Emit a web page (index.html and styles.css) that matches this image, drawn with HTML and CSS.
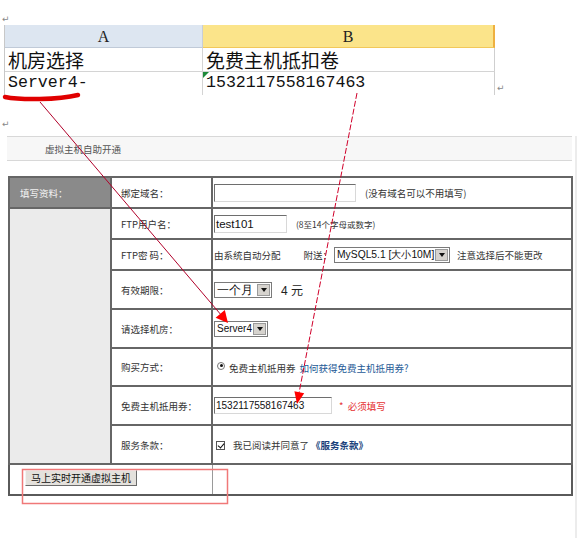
FILE: index.html
```html
<!DOCTYPE html>
<html lang="zh">
<head>
<meta charset="utf-8">
<link rel="stylesheet" href="styles.css">
</head>
<body>
<div class="page">
  <div class="para para-top"><span class="ret">↵</span></div>
  <div class="sheet-line">
    <div class="sheet">
      <div class="colhead colhead-a">A</div>
      <div class="colhead colhead-b">B</div>
      <div class="cell cell-cn">机房选择</div>
      <div class="cell cell-cn cell-b">免费主机抵扣卷</div>
      <div class="cell cell-mono">Server4-</div>
      <div class="cell cell-mono cell-b"><span class="tri"></span>1532117558167463</div>
    </div>
    <span class="ret ret-side">↵</span>
  </div>
  <div class="para para-mid"><span class="ret">↵</span></div>

  <div class="form-area">
    <div class="title-bar">虚拟主机自助开通</div>
    <table class="form">
      <colgroup><col class="c1"><col class="c2"><col class="c3"></colgroup>
      <tr class="r31">
        <td class="sec">填写资料：</td>
        <td class="lbl">绑定域名：</td>
        <td class="val"><span class="input input-domain"></span><span class="note">(没有域名可以不用填写)</span></td>
      </tr>
      <tr class="r31">
        <td class="side" rowspan="7"></td>
        <td class="lbl">FTP用户名：</td>
        <td class="val"><span class="input input-user">test101</span><span class="note small">(8至14个字母或数字)</span></td>
      </tr>
      <tr class="r31">
        <td class="lbl">FTP密 码：</td>
        <td class="val"><span class="plain">由系统自动分配</span><span class="plain gift">附送：</span><span class="select sel-mysql"><span class="sel-text">MySQL5.1 [大小10M]</span><span class="sel-btn"></span></span><span class="plain warn">注意选择后不能更改</span></td>
      </tr>
      <tr class="r39">
        <td class="lbl">有效期限：</td>
        <td class="val"><span class="select sel-term"><span class="sel-text">一个月</span><span class="sel-btn"></span></span><span class="price">4 元</span></td>
      </tr>
      <tr class="r39">
        <td class="lbl">请选择机房：</td>
        <td class="val"><span class="select sel-room"><span class="sel-text">Server4</span><span class="sel-btn"></span></span></td>
      </tr>
      <tr class="r38">
        <td class="lbl">购买方式：</td>
        <td class="val"><span class="radio"></span><span class="plain">免费主机抵用券</span><a class="link" href="#">如何获得免费主机抵用券?</a></td>
      </tr>
      <tr class="r39">
        <td class="lbl">免费主机抵用券：</td>
        <td class="val"><span class="input input-coupon">1532117558167463</span><span class="must">*&nbsp; 必须填写</span></td>
      </tr>
      <tr class="r39">
        <td class="lbl">服务条款：</td>
        <td class="val"><span class="check"></span><span class="plain">我已阅读并同意了</span><a class="terms" href="#">《服务条款》</a></td>
      </tr>
      <tr class="r31 last">
        <td class="btn-cell" colspan="2"><button class="btn" type="button">马上实时开通虚拟主机</button></td>
        <td class="empty"></td>
      </tr>
    </table>
  </div>

  <svg class="overlay" width="578" height="538" viewBox="0 0 578 538">
    <path d="M5 97 C20 100 58 100 78 95" fill="none" stroke="#e00000" stroke-width="4.5" stroke-linecap="round"/>
    <line x1="40" y1="102" x2="222" y2="316" stroke="#b0002a" stroke-width="1"/>
    <polygon points="228,323 215.6,317.8 224.8,310" fill="#ff0000"/>
    <line x1="357" y1="93" x2="299" y2="393" stroke="#d0002a" stroke-width="1" stroke-dasharray="6 2"/>
    <polygon points="297,404 304.2,393.2 294.4,391.3" fill="#ff0000"/>
    <rect x="22.5" y="469.5" width="205" height="34" fill="none" stroke="#f07878" stroke-width="1.5"/>
  </svg>
</div>
</body>
</html>
```

FILE: styles.css
```css
* { box-sizing: border-box; }
html, body { margin: 0; padding: 0; background: #ffffff; }
body { font-family: "Noto Sans CJK SC", "Liberation Sans", sans-serif; color: #333; }

.page { position: relative; width: 578px; height: 538px; overflow: hidden; }

.ret { font-family: "DejaVu Sans", sans-serif; font-size: 9px; color: #888; line-height: 1; }
.para-top { height: 25px; padding: 3px 0 0 2px; }
.para-mid { height: 41px; padding: 13px 0 0 2px; }

.sheet-line { display: flex; align-items: flex-end; margin-left: 4px; }
.ret-side { margin: 0 0 2px 2px; }
.sheet {
  display: grid;
  grid-template-columns: 198px 292px;
  grid-template-rows: 23px 24px 23px;
  border-left: 1px solid #c8c8c8;
}
.colhead {
  font-family: "Liberation Serif", serif;
  font-size: 16px;
  display: flex; align-items: center; justify-content: center;
  color: #222;
  padding-top: 2px;
}
.colhead-a { background: #dde6f1; border-bottom: 1px solid #c0cad8; border-right: 1px solid #c8ced8; }
.colhead-b { background: #fbe48a; border-bottom: 1px solid #f2c85a; border-right: 2px solid #eeb040; }
.cell {
  display: flex; align-items: center;
  padding-left: 3px;
  color: #111;
  border-right: 1px solid #d4d4d4;
  position: relative;
}
.cell-b { border-right: 1px solid #cfcfcf; }
.cell-cn { font-family: "Noto Sans CJK SC", sans-serif; font-size: 19px; border-bottom: 1px solid #d4d4d4; line-height: 1; }
.cell-mono { font-family: "Liberation Mono", monospace; font-size: 16.6px; line-height: 1; }
.tri {
  position: absolute; left: 0; top: 0;
  width: 0; height: 0;
  border-top: 6px solid #1e8a3a;
  border-right: 6px solid transparent;
}

.form-area { border-right: 2px solid #ececec; width: 577px; padding-bottom: 45px; }
.title-bar {
  margin-left: 7px;
  width: 565px;
  height: 25px;
  background: #f7f7f7;
  border-top: 1px solid #d8d8d8;
  border-bottom: 1px solid #d8d8d8;
  font-size: 9.5px;
  color: #555;
  display: flex; align-items: center;
  padding-left: 38px;
}

.form {
  margin: 15px 0 0 8px;
  width: 563px;
  border-collapse: collapse;
  table-layout: fixed;
  font-size: 9.5px;
  border: 2px solid #5a5a5a;
}
.c1 { width: 102px; }
.c2 { width: 101px; }
.c3 { width: 360px; }
.form td { border: 2px solid #666; padding: 0; vertical-align: middle; }
.r31 { height: 31px; }
.r38 { height: 38px; }
.r39 { height: 39px; }

.sec { background: #8a8a8a; color: #f2f2f2; padding-left: 10px !important; }
.side { background: #ebebeb; }
.lbl { padding-left: 9px !important; color: #333; }
.val { padding-left: 1px !important; white-space: nowrap; }
.val > span, .val > a { display: inline-block; vertical-align: middle; }

.input {
  height: 18px;
  border-top: 1px solid #6e6e6e;
  border-left: 1px solid #6e6e6e;
  border-right: 1px solid #d8d8d8;
  border-bottom: 1px solid #d8d8d8;
  background: #fff;
  font-family: "Liberation Sans", sans-serif;
  font-size: 11.5px;
  color: #111;
  line-height: 16px;
  padding-left: 1px;
}
.input-domain { width: 142px; }
.input-user { width: 73px; }
.input-coupon { width: 118px; height: 17px; font-size: 10px; line-height: 15px; }
.note { margin-left: 9px; color: #333; }
.note.small { font-size: 8.5px; }
.plain { color: #333; }
.gift { margin-left: 23px; }
.warn { margin-left: 7px; }

.val > .select {
  display: inline-flex;
  height: 16px;
  border: 1px solid #7a7a7a;
  background: #fff;
  align-items: center;
  font-family: "Liberation Sans", sans-serif;
  color: #111;
  padding-left: 2px;
  overflow: hidden;
}
.sel-text { flex: 1 1 auto; min-width: 0; overflow: hidden; white-space: nowrap; line-height: 14px; }
.sel-btn {
  flex: none;
  width: 13px; height: 12px;
  background: #d6d3ce;
  border: 1px solid #9a9a9a;
  margin-right: 1px;
  position: relative;
}
.sel-btn::after {
  content: "";
  position: absolute; left: 2.5px; top: 3.5px;
  border-top: 4px solid #111;
  border-left: 3px solid transparent;
  border-right: 3px solid transparent;
}
.sel-mysql { width: 116px; margin-left: 2px; font-size: 10.3px; }
.sel-term { width: 58px; font-size: 12px; font-weight: 300; }
.sel-room { width: 54px; font-size: 10px; }
.price { margin-left: 9px; font-family: "Liberation Sans", "Noto Sans CJK SC", sans-serif; font-size: 12px; color: #222; }

.radio {
  width: 8px; height: 8px;
  border-radius: 50%;
  border: 1px solid #777;
  margin: 0 4px 0 3px;
  position: relative;
  top: -2px;
  background: #fff;
}
.radio::after {
  content: ""; position: absolute; left: 1.5px; top: 1.5px;
  width: 3px; height: 3px; border-radius: 50%; background: #111;
}
.link { color: #1e5a96; text-decoration: none; margin-left: 4px; }
.must { color: #e53030; margin-left: 7px; }

.check {
  width: 9px; height: 9px;
  border: 1px solid #555;
  background: #fff;
  margin: 0 8px 0 2px;
  position: relative;
}
.check::after {
  content: "";
  position: absolute; left: 2px; top: 0px;
  width: 3px; height: 5px;
  border-right: 1.5px solid #111;
  border-bottom: 1.5px solid #111;
  transform: rotate(40deg);
}
.terms { color: #1a3f7a; font-weight: bold; text-decoration: none; margin-left: 2px; }

.last td { border: 1px solid #9a9a9a; border-bottom: 2px solid #5a5a5a; }
.btn-cell { padding-left: 15px !important; vertical-align: top !important; padding-top: 5px !important; }
.btn {
  height: 16px;
  width: 112px;
  background: #e4e1dc;
  border-top: 1px solid #f4f4f4;
  border-left: 1px solid #f4f4f4;
  border-right: 1px solid #6a6a6a;
  border-bottom: 1px solid #6a6a6a;
  font-family: "Noto Sans CJK SC", sans-serif;
  font-size: 10px;
  color: #111;
  padding: 0;
  line-height: 14px;
  margin-left: 0;
}

.overlay { position: absolute; left: 0; top: 0; pointer-events: none; }
```
